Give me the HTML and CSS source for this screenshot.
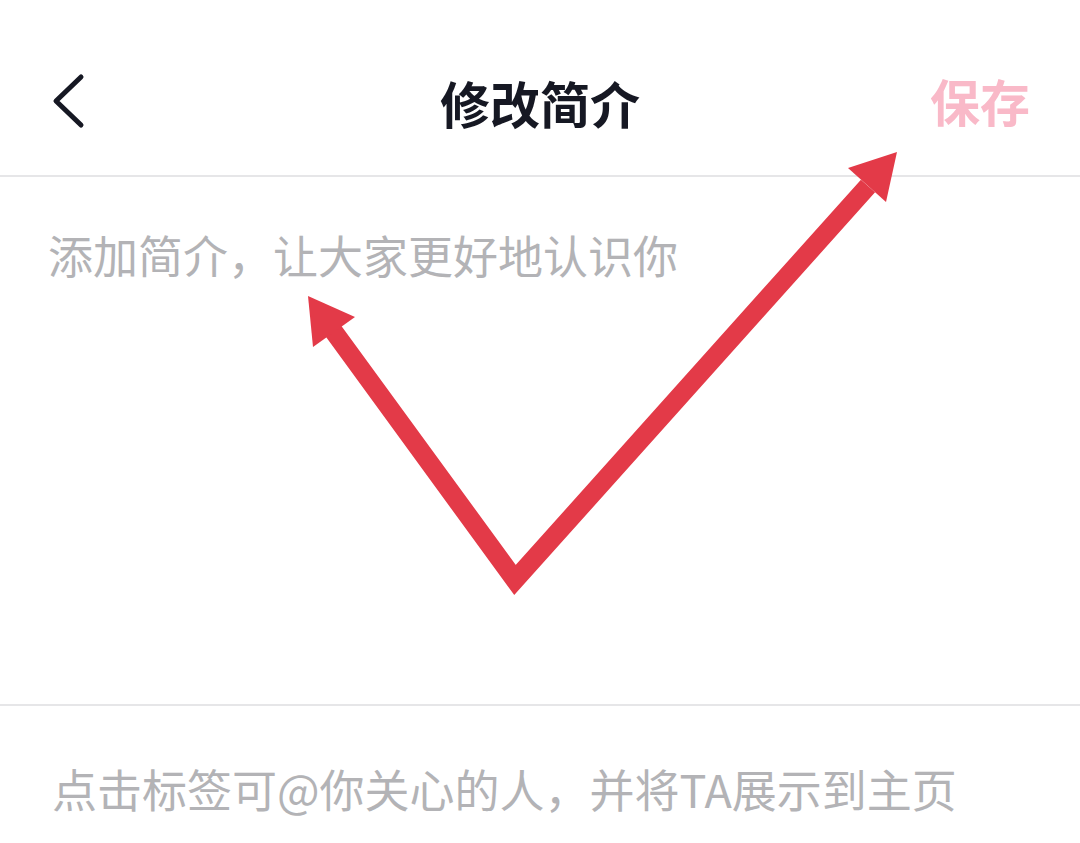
FILE: index.html
```html
<!DOCTYPE html>
<html lang="zh-CN">
<head>
<meta charset="utf-8">
<title>修改简介</title>
<link rel="stylesheet" href="styles.css">
</head>
<body>
<div class="page">
  <header class="header">
    <div class="back">
      <svg class="back-icon" viewBox="0 0 40 60" width="40" height="60">
        <polyline points="31,6 6,30 31,54" fill="none" stroke="#161823" stroke-width="5" stroke-linecap="round" stroke-linejoin="round"/>
      </svg>
    </div>
    <h1 class="title">修改简介</h1>
    <div class="save">保存</div>
  </header>
  <section class="editor">
    <p class="placeholder">添加简介，让大家更好地认识你</p>
  </section>
  <section class="hint">
    <p class="hint-text">点击标签可@你关心的人，并将TA展示到主页</p>
  </section>
  <svg class="annotation" viewBox="0 0 1080 843" width="1080" height="843">
    <polyline points="329,325 515,580 868,186" fill="none" stroke="#e33a48" stroke-width="19" stroke-linejoin="miter" stroke-miterlimit="4"/>
    <polygon points="308,296 313,347 355,317" fill="#e33a48"/>
    <polygon points="897,152 848,168 886,202" fill="#e33a48"/>
  </svg>
</div>
</body>
</html>
```

FILE: styles.css
```css
* {
  box-sizing: border-box;
}

html, body {
  margin: 0;
  padding: 0;
  background: #ffffff;
}

body {
  width: 1080px;
  height: 843px;
  overflow: hidden;
  font-family: "Noto Sans CJK SC", "Noto Sans", sans-serif;
}

.page {
  position: relative;
  width: 1080px;
  height: 843px;
  display: flex;
  flex-direction: column;
}

.header {
  height: 177px;
  padding: 32px 50px 0 50px;
  border-bottom: 2px solid #e6e6e8;
  display: grid;
  grid-template-columns: 1fr auto 1fr;
  align-items: start;
}

.back {
  height: 140px;
  display: flex;
  align-items: center;
}

.back-icon {
  display: block;
  margin-top: -2px;
}

.title {
  margin: 0;
  height: 140px;
  display: flex;
  align-items: center;
  font-size: 50px;
  font-weight: 700;
  color: #161823;
  letter-spacing: 0;
}

.save {
  justify-self: end;
  height: 140px;
  display: flex;
  align-items: center;
  margin-top: -2px;
  font-size: 50px;
  font-weight: 700;
  color: #f9b9c8;
}

.editor {
  height: 529px;
  padding: 46px 48px 0;
  border-bottom: 2px solid #e6e6e8;
}

.placeholder {
  margin: 0;
  font-size: 45px;
  line-height: 63px;
  color: #b3b3b6;
}

.hint {
  flex: 1;
  padding: 51px 52px 0;
}

.hint-text {
  margin: 0;
  font-size: 45px;
  line-height: 63px;
  color: #b3b3b6;
}

.annotation {
  position: absolute;
  left: 0;
  top: 0;
  pointer-events: none;
}
```
